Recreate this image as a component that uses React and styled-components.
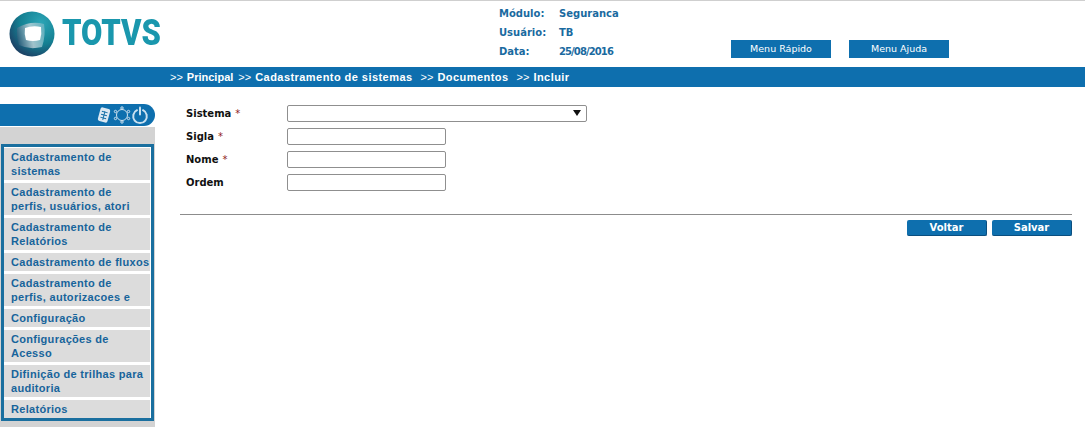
import React from "react";
import styled, { createGlobalStyle } from "styled-components";

const menuItems = [
  "Cadastramento de sistemas",
  "Cadastramento de perfis, usuários, atori",
  "Cadastramento de Relatórios",
  "Cadastramento de fluxos",
  "Cadastramento de perfis, autorizacoes e",
  "Configuração",
  "Configurações de Acesso",
  "Difinição de trilhas para auditoria",
  "Relatórios",
];

const crumbs = ["Principal", "Cadastramento de sistemas", "Documentos", "Incluir"];

const fields = [
  { label: "Sistema", required: true, select: true },
  { label: "Sigla", required: true },
  { label: "Nome", required: true },
  { label: "Ordem" },
];

function Logo() {
  return (
    <LogoWrap>
      <svg width="46" height="46" viewBox="0 0 46 46">
        <defs>
          <radialGradient id="globe" cx="0.7" cy="0.25" r="0.95">
            <stop offset="0" stopColor="#2ba5b6" />
            <stop offset="0.5" stopColor="#148092" />
            <stop offset="0.8" stopColor="#1b4a6c" />
            <stop offset="1" stopColor="#1a2a4c" />
          </radialGradient>
          <linearGradient id="shine" x1="0" y1="0.5" x2="1" y2="0.3">
            <stop offset="0" stopColor="#2c5f7c" />
            <stop offset="0.5" stopColor="#c4d6dc" />
            <stop offset="1" stopColor="#6fb6c4" />
          </linearGradient>
          <filter id="soft">
            <feGaussianBlur stdDeviation="0.7" />
          </filter>
        </defs>
        <circle cx="23" cy="23" r="22.500" fill="url(#globe)" />
        <path d="M8 17 Q22 9 35 13 Q37 24 33 36 Q20 39 10 34 Q7 25 8 17Z" fill="url(#shine)" opacity="0.8" filter="url(#soft)" />
        <path d="M16 17 Q24 14 32 16 Q33 23 31 29 Q24 31 17 29 Q15 23 16 17Z" fill="#fff" filter="url(#soft)" />
      </svg>
      <LogoText>TOTVS</LogoText>
    </LogoWrap>
  );
}

function SideIcons() {
  return (
    <svg width="52" height="20" viewBox="0 0 52 20" fill="none">
      <g transform="rotate(15 7 10)">
        <rect x="2" y="3" width="10" height="14" rx="2" fill="#dbe8f2" />
        <path d="M4 7h6M4 10h6M4 13h6M7 6v9" stroke="#1670a8" strokeWidth="1" />
      </g>
      <g stroke="#cfe2ef" strokeWidth="1">
        <circle cx="25" cy="10" r="5.500" />
        <circle cx="25" cy="3" r="1.200" />
        <circle cx="25" cy="17" r="1.200" />
        <circle cx="18.500" cy="6.500" r="1.200" />
        <circle cx="31.500" cy="6.500" r="1.200" />
        <circle cx="18.500" cy="13.500" r="1.200" />
        <circle cx="31.500" cy="13.500" r="1.200" />
      </g>
      <g stroke="#c9e0f0" strokeWidth="2" strokeLinecap="round">
        <path d="M40 5.200a6.800 6.800 0 1 0 6 0" />
        <path d="M43 2.500v7" />
      </g>
    </svg>
  );
}

export default function App() {
  return (
    <Page>
      <GlobalStyle />
      <Header>
        <Logo />
        <Info>
          <InfoLabel>Módulo:</InfoLabel>
          <InfoLabel>Seguranca</InfoLabel>
          <InfoLabel>Usuário:</InfoLabel>
          <InfoLabel>TB</InfoLabel>
          <InfoLabel>Data:</InfoLabel>
          <InfoLabel $tight>25/08/2016</InfoLabel>
        </Info>
        <TopButtons>
          <TopButton>Menu Rápido</TopButton>
          <TopButton>Menu Ajuda</TopButton>
        </TopButtons>
      </Header>
      <NavBar>
        {crumbs.map((c) => (
          <Crumb key={c}>
            <Arrows>&gt;&gt;</Arrows>
            {c}
          </Crumb>
        ))}
      </NavBar>
      <Body>
        <Sidebar>
          <Pill>
            <SideIcons />
          </Pill>
          <SideGray>
            <MenuBox>
              {menuItems.map((m) => (
                <MenuItem key={m}>{m}</MenuItem>
              ))}
            </MenuBox>
          </SideGray>
        </Sidebar>
        <Main>
          <Form>
            {fields.map((f) => (
              <FormRow key={f.label}>
                <Label>
                  {f.label}
                  {f.required && <Req>*</Req>}
                </Label>
                {f.select ? (
                  <SelectBox>
                    <Caret />
                  </SelectBox>
                ) : (
                  <TextInput />
                )}
              </FormRow>
            ))}
          </Form>
          <Divider />
          <Actions>
            <ActionButton>Voltar</ActionButton>
            <ActionButton>Salvar</ActionButton>
          </Actions>
        </Main>
      </Body>
    </Page>
  );
}

const GlobalStyle = createGlobalStyle`
  html, body {
    margin: 0;
    padding: 0;
    background: #fff;
    overflow: hidden;
  }
`;

const Page = styled.div`
  width: 1085px;
  height: 427px;
  font-family: "Liberation Sans", Arial, sans-serif;
  border-top: 1px solid #cfcfcf;
  box-sizing: border-box;
  overflow: hidden;
`;

const Header = styled.div`
  height: 66px;
  display: flex;
`;

const LogoWrap = styled.div`
  width: 499px;
  flex: none;
  display: flex;
  align-items: flex-start;
  padding: 10px 0 0 9px;
  box-sizing: border-box;
  gap: 7px;
`;

const LogoText = styled.div`
  font-family: "Roboto", "Liberation Sans", sans-serif;
  font-weight: 900;
  font-size: 36px;
  line-height: 44px;
  color: #1a97ad;
  transform: scaleX(0.86);
  transform-origin: left center;
`;

const Info = styled.div`
  width: 232px;
  flex: none;
  display: grid;
  grid-template-columns: 60px 1fr;
  grid-auto-rows: 19px;
  padding-top: 3px;
  align-content: start;
`;

const InfoLabel = styled.span`
  font-family: "DejaVu Sans", sans-serif;
  font-size: 10px;
  font-weight: 700;
  line-height: 19px;
  color: #1a6a9f;
  letter-spacing: ${(p) => (p.$tight ? "-0.9px" : "0")};
`;

const TopButtons = styled.div`
  display: flex;
  gap: 18px;
  padding-top: 39px;
`;

const TopButton = styled.div`
  width: 100px;
  height: 18px;
  background: #0e6fae;
  color: #fff;
  font-family: "DejaVu Sans", sans-serif;
  font-size: 9.500px;
  line-height: 18px;
  text-align: center;
`;

const NavBar = styled.div`
  height: 20px;
  background: #0e6fae;
  color: #fff;
  padding-left: 170px;
  display: flex;
  gap: 8px;
  font-size: 11px;
  font-weight: 700;
  line-height: 20px;
  letter-spacing: 0.45px;
`;

const Crumb = styled.span`
  white-space: nowrap;

  &:first-child {
    letter-spacing: 0;
    margin-right: -3px;
  }
`;

const Arrows = styled.span`
  font-weight: 400;
  letter-spacing: 0;
  margin-right: 4px;
`;

const Body = styled.div`
  display: flex;
`;

const Sidebar = styled.div`
  width: 155px;
  flex: none;
  padding-top: 17px;
`;

const Pill = styled.div`
  height: 22px;
  background: #0e6fae;
  border-radius: 0 11px 11px 0;
  display: flex;
  align-items: center;
  justify-content: flex-end;
  padding-right: 6px;
  box-sizing: border-box;
`;

const SideGray = styled.div`
  margin-top: 1px;
  background: #d3d3d3;
  padding-top: 17px;
  height: 300px;
  box-sizing: border-box;
`;

const MenuBox = styled.div`
  margin: 0 1px;
  border: 3px solid #1a6f9f;
  background: #fff;
  display: flex;
  flex-direction: column;
  gap: 3px;
  padding: 1px 1px 0 0;
`;

const MenuItem = styled.div`
  background: #dcdcdc;
  padding: 2px 0 2px 7px;
  font-size: 11px;
  font-weight: 700;
  line-height: 14px;
  letter-spacing: 0.3px;
  color: #17649b;
`;

const Main = styled.div`
  flex: 1;
  padding: 18px 13px 0 25px;
`;

const Form = styled.div`
  display: flex;
  flex-direction: column;
  gap: 6px;
`;

const FormRow = styled.div`
  display: flex;
  align-items: center;
  height: 17px;
`;

const Label = styled.div`
  width: 107px;
  padding-left: 6px;
  box-sizing: border-box;
  font-family: "DejaVu Sans", sans-serif;
  font-size: 10px;
  font-weight: 700;
  color: #111;
  flex: none;
`;

const Req = styled.span`
  color: #8e1c1c;
  font-weight: 400;
  margin-left: 4px;
`;

const TextInput = styled.div`
  width: 159px;
  height: 17px;
  box-sizing: border-box;
  border: 1px solid #8f8f8f;
  border-radius: 2px;
  background: #fff;
`;

const SelectBox = styled(TextInput)`
  width: 300px;
  position: relative;
`;

const Caret = styled.span`
  position: absolute;
  right: 5px;
  top: 4px;
  width: 0;
  height: 0;
  border-left: 4px solid transparent;
  border-right: 4px solid transparent;
  border-top: 6px solid #111;
`;

const Divider = styled.div`
  height: 1px;
  background: #8c8c8c;
  margin-top: 23px;
`;

const Actions = styled.div`
  display: flex;
  justify-content: flex-end;
  gap: 5px;
  margin-top: 5px;
`;

const ActionButton = styled.div`
  width: 80px;
  height: 16px;
  background: #0e6fae;
  border-radius: 2px;
  border-bottom: 1px solid #0a4f80;
  border-right: 1px solid #0a4f80;
  box-sizing: border-box;
  color: #fff;
  font-family: "DejaVu Sans", sans-serif;
  font-size: 10px;
  font-weight: 700;
  line-height: 16px;
  text-align: center;
`;
